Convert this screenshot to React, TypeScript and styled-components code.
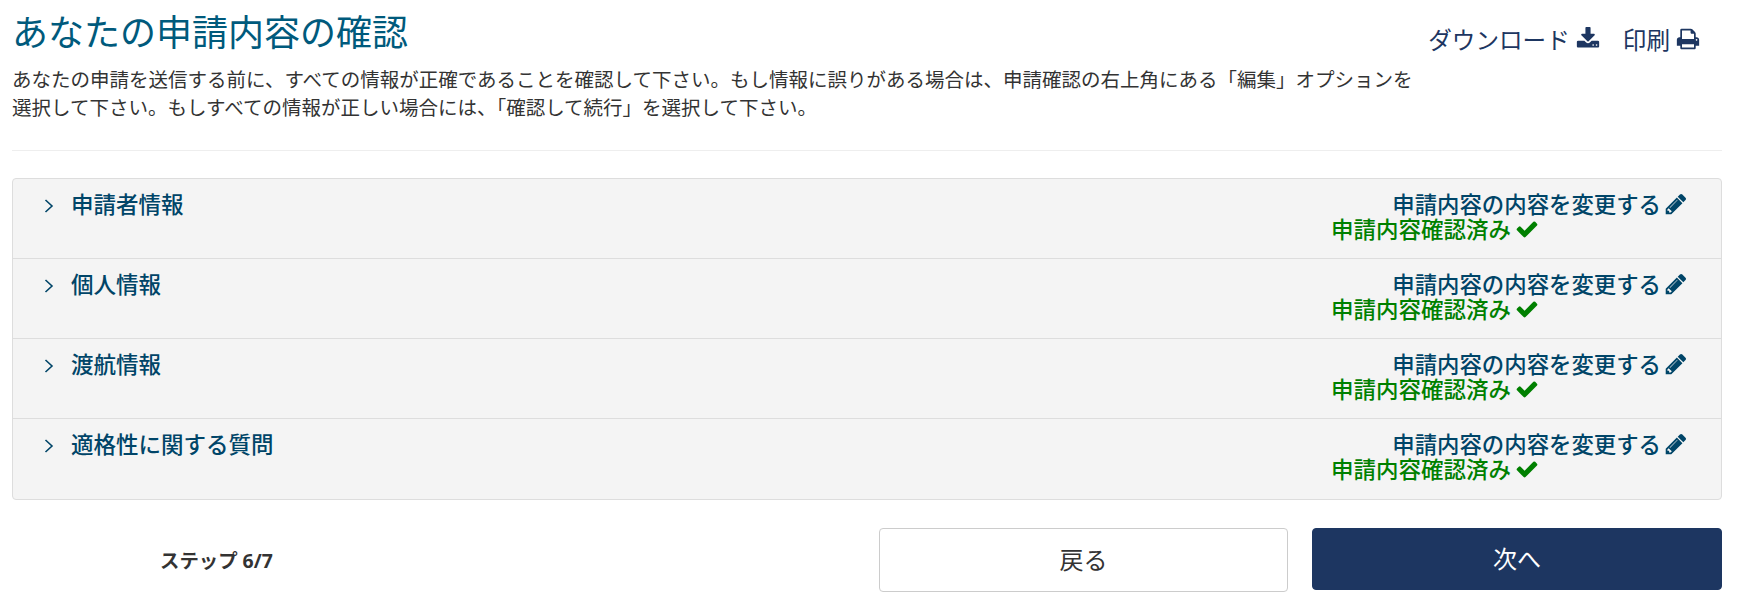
import React from 'react';
import styled, { createGlobalStyle } from 'styled-components';

const GlobalStyle = createGlobalStyle`
  html, body {
    margin: 0;
    background: #fff;
    font-family: "Open Sans", "Noto Sans CJK JP", sans-serif;
    color: #333;
  }
`;

const DOWNLOAD =
  'M1344 1344q0-26-19-45t-45-19-45 19-19 45 19 45 45 19 45-19 19-45zm256 0q0-26-19-45t-45-19-45 19-19 45 19 45 45 19 45-19 19-45zm128-224v320q0 40-28 68t-68 28h-1472q-40 0-68-28t-28-68v-320q0-40 28-68t68-28h465l135 136q58 56 136 56t136-56l136-136h464q40 0 68 28t28 68zm-325-569q17 41-14 70l-448 448q-18 19-45 19t-45-19l-448-448q-31-29-14-70 17-39 59-39h256v-448q0-26 19-45t45-19h256q26 0 45 19t19 45v448h256q42 0 59 39z';
const PRINT =
  'M448 1536h896v-256h-896v256zm0-640h896v-384h-160q-40 0-68-28t-28-68v-160h-640v640zm1152 64q0-26-19-45t-45-19-45 19-19 45 19 45 45 19 45-19 19-45zm128 0v416q0 13-9.500 22.500t-22.500 9.500h-224v160q0 40-28 68t-68 28h-960q-40 0-68-28t-28-68v-160h-224q-13 0-22.500-9.500t-9.500-22.500v-416q0-79 56.500-135.500t135.500-56.500h64v-544q0-40 28-68t68-28h672q40 0 88 20t76 48l152 152q28 28 48 76t20 88v256h64q79 0 135.500 56.500t56.500 135.500z';
const PENCIL =
  'M491 1536l91-91-235-235-91 91v107h128v128h107zm523-928q0-22-22-22-10 0-17 7l-542 542q-7 7-7 17 0 22 22 22 10 0 17-7l542-542q7-7 7-17zm-54-192l416 416-832 832h-416v-416zm683 96q0 53-37 90l-166 166-416-416 166-165q36-38 90-38 53 0 91 38l235 234q37 39 37 91z';
const CHECK =
  'M1671 566q0 40-28 68l-724 724-136 136q-28 28-68 28t-68-28l-136-136-362-362q-28-28-28-68t28-68l136-136q28-28 68-28t68 28l294 295 656-657q28-28 68-28t68 28l136 136q28 28 28 68z';

const Icon = ({ d, size }: { d: string; size: number }) => (
  <svg width={size} height={size} viewBox="0 0 1792 1792" fill="currentColor">
    <path d={d} />
  </svg>
);

const SECTIONS = ['申請者情報', '個人情報', '渡航情報', '適格性に関する質問'];

const App = () => {
  return (
    <Page>
      <GlobalStyle />
      <Header>
        <Intro>
          <Title>あなたの申請内容の確認</Title>
          <Description>
            あなたの申請を送信する前に、すべての情報が正確であることを確認して下さい。もし情報に誤りがある場合は、申請確認の右上角にある「編集」オプションを
            <br />
            選択して下さい。もしすべての情報が正しい場合には、「確認して続行」を選択して下さい。
          </Description>
        </Intro>
        <Tools>
          <ToolLink>
            ダウンロード
            <Icon d={DOWNLOAD} size={24} />
          </ToolLink>
          <ToolLink>
            印刷
            <Icon d={PRINT} size={24} />
          </ToolLink>
        </Tools>
      </Header>
      <Card>
        {SECTIONS.map((name) => (
          <Row key={name}>
            <RowTitle>
              <Chevron width="10" height="14" viewBox="0 0 10 14">
                <polyline points="1.5,1 8,7 1.5,13" />
              </Chevron>
              {name}
            </RowTitle>
            <RowStatus>
              <EditLink>
                申請内容の内容を変更する
                <Icon d={PENCIL} size={24} />
              </EditLink>
              <Confirmed>
                申請内容確認済み
                <Icon d={CHECK} size={24} />
              </Confirmed>
            </RowStatus>
          </Row>
        ))}
      </Card>
      <Footer>
        <StepLabel>ステップ 6/7</StepLabel>
        <Buttons>
          <BackButton>戻る</BackButton>
          <NextButton>次へ</NextButton>
        </Buttons>
      </Footer>
    </Page>
  );
};

const Page = styled.div`
  width: 1710px;
  padding-left: 12px;
  height: 601px;
  overflow: hidden;
`;
const Header = styled.div`
  display: flex;
  justify-content: space-between;
  height: 150px;
  box-sizing: content-box;
  border-bottom: 1px solid #eee;
`;
const Intro = styled.div`
  padding-top: 11px;
`;
const Title = styled.h1`
  margin: 0;
  font-size: 36px;
  line-height: 44px;
  font-weight: 400;
  color: #005a7c;
`;
const Description = styled.p`
  margin: 11px 0 0 0;
  font-size: 19.5px;
  line-height: 27.5px;
  color: #333;
`;
const Tools = styled.div`
  display: flex;
  gap: 23px;
  padding: 27px 22px 0 0;
`;
const ToolLink = styled.a`
  display: flex;
  align-items: flex-start;
  gap: 6px;
  font-size: 23.6px;
  line-height: 26px;
  color: #1d3661;
`;
const Card = styled.div`
  margin-top: 27px;
  background: #f4f4f4;
  border: 1px solid #ddd;
  border-radius: 4px;
`;
const Row = styled.div`
  display: flex;
  justify-content: space-between;
  height: 79px;
  box-sizing: border-box;
  padding: 13px 33px 0 31px;
  & + & {
    height: 80px;
    border-top: 1px solid #ddd;
  }
  &:last-child {
    height: 81px;
  }
`;
const RowTitle = styled.div`
  display: flex;
  align-items: flex-start;
  gap: 17px;
  font-size: 22.5px;
  line-height: 26px;
  font-weight: 500;
  color: #004568;
`;
const Chevron = styled.svg`
  margin-top: 7px;
  fill: none;
  stroke: #004568;
  stroke-width: 1.6;
`;
const RowStatus = styled.div`
  display: flex;
  flex-direction: column;
  align-items: flex-end;
`;
const EditLink = styled.div`
  display: flex;
  gap: 3px;
  font-size: 22.4px;
  line-height: 25px;
  font-weight: 500;
  color: #004568;
`;
const Confirmed = styled(EditLink)`
  gap: 4px;
  margin-right: 149px;
  font-size: 22.5px;
  color: #008000;
`;
const Footer = styled.div`
  display: flex;
  justify-content: space-between;
  align-items: flex-start;
  margin-top: 28px;
`;
const StepLabel = styled.div`
  margin: 20px 0 0 148px;
  font-size: 19.4px;
  line-height: 26px;
  font-weight: 700;
  color: #333;
`;
const Buttons = styled.div`
  display: flex;
  align-items: flex-start;
  gap: 24px;
`;
const BackButton = styled.button`
  width: 409px;
  height: 64px;
  padding: 0 0 4px;
  background: #fff;
  border: 1px solid #ccc;
  border-radius: 4px;
  font-family: inherit;
  font-size: 24px;
  color: #333;
`;
const NextButton = styled(BackButton)`
  width: 410px;
  height: 62px;
  background: #1d3661;
  border-color: #1d3661;
  color: #fff;
`;

export default App;
